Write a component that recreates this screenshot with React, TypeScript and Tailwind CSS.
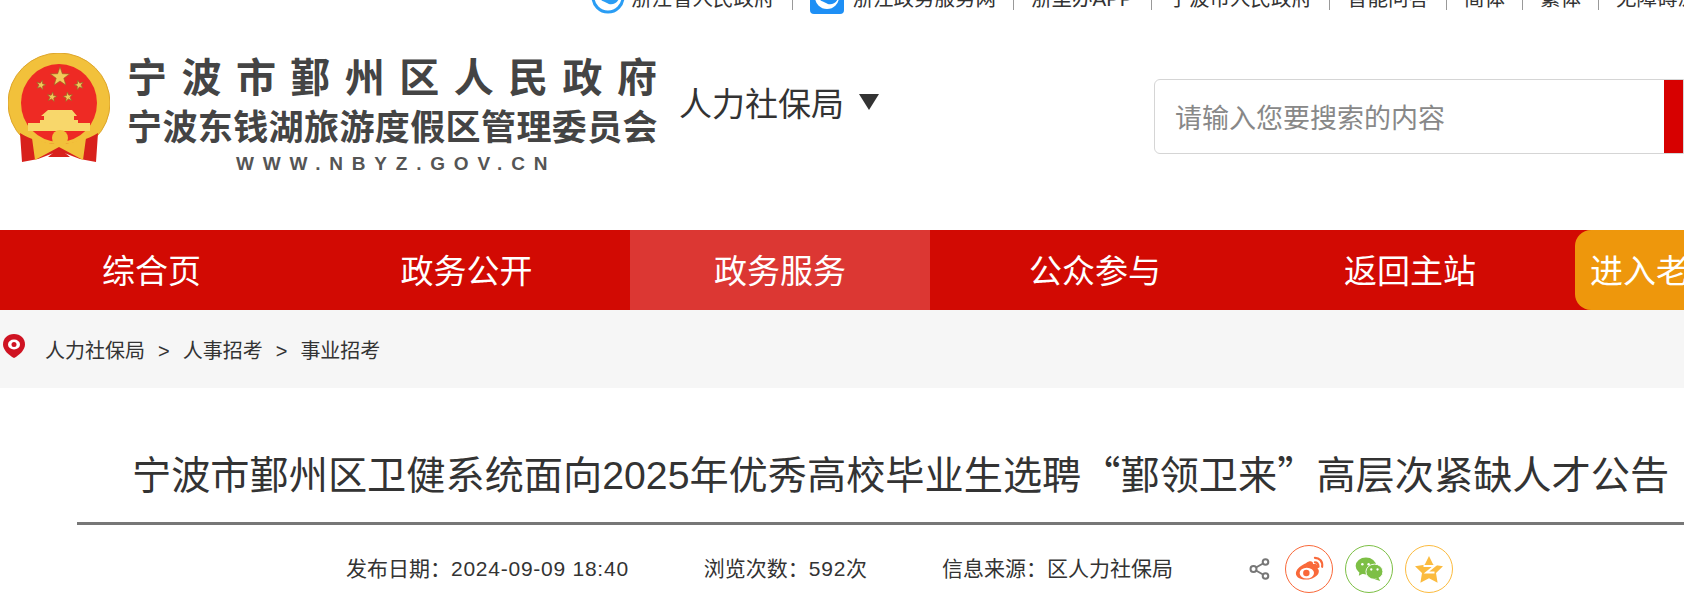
const topLinks = ['浙里办APP', '宁波市人民政府', '智能问答', '简体', '繁体', '无障碍浏览'];
const navItems = [
  { label: '综合页', width: 'w-[303px]', active: false },
  { label: '政务公开', width: 'w-[327px]', active: false },
  { label: '政务服务', width: 'w-[300px]', active: true },
  { label: '公众参与', width: 'w-[330px]', active: false },
  { label: '返回主站', width: 'w-[300px]', active: false },
];

function Star({ x, y, r, rotate = 0 }: { x: number; y: number; r: number; rotate?: number }) {
  const pts = Array.from({ length: 10 }, (_, i) => {
    const a = (Math.PI / 5) * i - Math.PI / 2;
    const d = i % 2 === 0 ? r : r * 0.4;
    return `${x + d * Math.cos(a)},${y + d * Math.sin(a)}`;
  }).join(' ');
  return <polygon points={pts} fill="#f3c95a" stroke="#8f6a24" strokeWidth="0.6" transform={`rotate(${rotate} ${x} ${y})`} />;
}

function Emblem() {
  return (
    <svg width="102" height="109" viewBox="0 0 102 109" className="shrink-0">
      <ellipse cx="51" cy="50" rx="51" ry="50" fill="#f2c13b" stroke="#dda52b" />
      <ellipse cx="51" cy="50" rx="38" ry="39" fill="#ee2a24" />
      <Star x={52} y={24} r={10} />
      <Star x={33} y={32} r={5} rotate={15} />
      <Star x={71} y={32} r={5} rotate={-15} />
      <Star x={44} y={44} r={5} rotate={10} />
      <Star x={60} y={44} r={5} rotate={-10} />
      <path d="M40 57h24l5 6h-3v4h4v3h12v8H20v-8h12v-3h4v-4h-3z" fill="#f8d76b" />
      <path d="M12 80c10 6 22 11 39 11s29-5 39-11l-2 29-16-3-21-8-21 8-16 3z" fill="#d8211c" />
      <path d="M24 85c9 3 17 6 27 6s18-3 27-6l-3 22-24-13-24 13z" fill="#f2c13b" />
      <circle cx="52" cy="85" r="8" fill="#f2c13b" />
      <path d="M40 104 51 95l11 9z" fill="#d8211c" />
    </svg>
  );
}

function SpeedLogo({ boxed }: { boxed?: boolean }) {
  return (
    <svg width="34" height="34" viewBox="0 0 34 34" className="shrink-0">
      {boxed && <rect width="34" height="34" rx="4" fill="#1e8ff5" />}
      <circle cx="17" cy="17" r={boxed ? 12 : 15} fill={boxed ? '#fff' : 'none'} stroke={boxed ? 'none' : '#2a9df4'} strokeWidth="3" />
      <path d="M6 14c5 5 9 1 13 4 4 2 6 4 10-2-2 8-9 10-13 7-4-2-7-2-10-9z" fill={boxed ? '#1e8ff5' : '#2a9df4'} />
    </svg>
  );
}

function ShareIcon() {
  return (
    <svg width="21" height="22" viewBox="0 0 21 22" fill="none" stroke="#777" strokeWidth="2">
      <circle cx="4.500" cy="11" r="3" />
      <circle cx="16.500" cy="4" r="2.800" />
      <circle cx="16.500" cy="18" r="2.800" />
      <path d="M7 9.500 14 5.500M7 12.500l7 4" />
    </svg>
  );
}

function Weibo() {
  return (
    <svg width="31" height="27" viewBox="0 0 34 30">
      <path d="M13 8c4-3 8-3 8 1 5-1 7 2 5 5 3 2 2 10-10 12C6 27 1 23 2 18c1-4 6-8 11-10z" fill="#f9693a" />
      <ellipse cx="14" cy="19" rx="8" ry="6" fill="#fff" />
      <circle cx="13.500" cy="19" r="3.600" fill="#f9693a" />
      <path d="M23 2c5 0 9 4 8 10M23 7c3 0 4 2 4 5" fill="none" stroke="#f9693a" strokeWidth="2.400" strokeLinecap="round" />
    </svg>
  );
}

function Wechat() {
  return (
    <svg width="29" height="25" viewBox="0 0 32 28">
      <ellipse cx="12" cy="10" rx="11.500" ry="9.500" fill="#7dbf45" />
      <path d="M5 16l-1 5 6-3z" fill="#7dbf45" />
      <ellipse cx="21.500" cy="16.500" rx="9.500" ry="8.500" fill="#7dbf45" stroke="#fff" />
      <path d="M26 23l2 4-6-2z" fill="#7dbf45" />
      <circle cx="8" cy="8" r="1.400" fill="#fff" />
      <circle cx="15" cy="8" r="1.400" fill="#fff" />
      <circle cx="18" cy="14" r="1.300" fill="#fff" />
      <circle cx="25" cy="14" r="1.300" fill="#fff" />
    </svg>
  );
}

function Qzone() {
  return (
    <svg width="28" height="27" viewBox="0 0 28 27">
      <path d="M14 0l4.300 8.800 9.700 1.400-7 6.900 1.600 9.700L14 22.200l-8.600 4.600L7 17.100 0 10.200l9.700-1.400z" fill="#fbbb3f" />
      <path d="M8.500 10h11l-8 6.500h8" fill="none" stroke="#fff" strokeWidth="2" />
    </svg>
  );
}

function TopDivider() {
  return <span className="mx-[17px] h-[26px] w-px shrink-0 bg-[#999]" />;
}

export default function App() {
  return (
    <div className="h-[603px] w-[1684px] overflow-hidden bg-white font-['Liberation_Sans','Noto_Sans_CJK_SC',sans-serif] text-[#333]">
      {/* Top links, the page is scrolled so they are cut off */}
      <div className="-mt-[20px] flex h-[34px] items-center whitespace-nowrap pl-[591px] text-[20.5px] leading-[24px]">
        <SpeedLogo />
        <span className="ml-[6px] mt-[4px]">浙江省人民政府</span>
        <TopDivider />
        <SpeedLogo boxed />
        <span className="ml-[9px] mt-[4px]">浙江政务服务网</span>
        {topLinks.map((t) => (
          <span key={t} className="flex items-center">
            <TopDivider />
            <span className="mt-[4px]">{t}</span>
          </span>
        ))}
      </div>

      {/* Header */}
      <div className="flex h-[216px] items-start">
        <div className="ml-[8px] mt-[39px] flex">
          <Emblem />
          <div className="ml-[17px] mt-[2px] flex w-[530px] flex-col font-bold text-[#444]">
            <div className="flex justify-between text-[40px] leading-[46px]">
              {'宁波市鄞州区人民政府'.split('').map((c, i) => (
                <span key={i}>{c}</span>
              ))}
            </div>
            <div className="mt-[4px] whitespace-nowrap text-[35px] leading-[46px] tracking-[0.4px]">宁波东钱湖旅游度假区管理委员会</div>
            <div className="ml-[109px] mt-[2px] whitespace-nowrap text-[19px] leading-[22px] tracking-[8.8px] text-[#555]">WWW.NBYZ.GOV.CN</div>
          </div>
        </div>
        <div className="ml-[22px] mt-[67px] flex items-center text-[33px] leading-[48px]">
          人力社保局
          <span className="ml-[15px] mt-[-6px] h-0 w-0 border-x-[10px] border-t-[16px] border-x-transparent border-t-[#333]" />
        </div>
        <div className="ml-auto mt-[65px] flex h-[75px] w-[530px] items-center overflow-hidden rounded-l-[6px] border border-[#d5d5d5]">
          <span className="mt-[6px] flex-1 pl-[20px] text-[27px] text-[#888]">请输入您要搜索的内容</span>
          <span className="h-full w-[19px] bg-[#d70000]" />
        </div>
      </div>

      {/* Main nav */}
      <div className="flex h-[80px] bg-[#d20a03] pt-0 text-[33px] text-white">
        {navItems.map((n) => (
          <div key={n.label} className={`flex shrink-0 items-center justify-center pt-[3px] ${n.width} ${n.active ? 'bg-[#dc3733]' : ''}`}>
            {n.label}
          </div>
        ))}
        <div className="ml-[15px] flex w-[200px] shrink-0 items-center whitespace-nowrap rounded-l-[16px] bg-[#ee970c] pl-[15px] pt-[3px]">进入老年版</div>
      </div>

      {/* Breadcrumb */}
      <div className="flex h-[78px] items-center bg-[#f6f6f6] pt-[4px] text-[20px] text-[#333]">
        <svg width="24" height="26" viewBox="0 0 24 26" className="ml-[2px] -mt-[11px]">
          <path d="M12 1C5.500 1 1 5.500 1 11.500 1 17 7 22.500 12 25c5-2.500 11-8 11-13.500C23 5.500 18.500 1 12 1z" fill="#cf1322" />
          <ellipse cx="12" cy="11.500" rx="6" ry="5" fill="#fff" />
          <circle cx="12" cy="11.500" r="2.500" fill="#cf1322" />
        </svg>
        <span className="ml-[19px]">人力社保局</span>
        <span className="mx-[13px]">&gt;</span>
        <span>人事招考</span>
        <span className="mx-[13px]">&gt;</span>
        <span>事业招考</span>
      </div>

      {/* Article head */}
      <div className="ml-[77px]">
        <h1 className="mt-[56px] whitespace-nowrap pl-[55px] text-[39.2px] font-normal leading-[56px] text-[#333]">
          宁波市鄞州区卫健系统面向2025年优秀高校毕业生选聘<span className="font-['Noto_Sans_CJK_SC']">“</span>鄞领卫来<span className="font-['Noto_Sans_CJK_SC']">”</span>高层次紧缺人才公告
        </h1>
        <div className="mt-[18px] h-[3px] bg-[#777]" />
        <div className="mt-[19px] flex h-[50px] items-center whitespace-nowrap pl-[269px] text-[21px] text-[#333]">
          <span>发布日期：<span className="tracking-[0.75px]">2024-09-09 18:40</span></span>
          <span className="ml-[75px]">浏览次数：<span className="tracking-[0.75px]">592</span>次</span>
          <span className="ml-[75px]">信息来源：区人力社保局</span>
          <span className="ml-[76px] flex items-center"><ShareIcon /></span>
          <span className="ml-[15px] flex h-[48px] w-[48px] items-center justify-center rounded-full border border-[#f9693a]"><Weibo /></span>
          <span className="ml-[12px] flex h-[48px] w-[48px] items-center justify-center rounded-full border border-[#7dbf45]"><Wechat /></span>
          <span className="ml-[12px] flex h-[48px] w-[48px] items-center justify-center rounded-full border border-[#fbbb3f]"><Qzone /></span>
        </div>
      </div>
    </div>
  );
}
